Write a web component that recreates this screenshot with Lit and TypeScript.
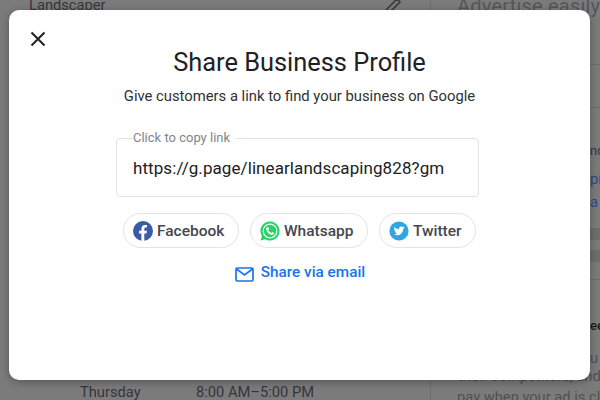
import { LitElement, html, css } from "lit";
import { customElement } from "lit/decorators.js";

@customElement("app-root")
export class AppRoot extends LitElement {
  static styles = css`
    :host { display: block; width: 600px; height: 400px; position: relative; overflow: hidden; background: #7b7b7b; font-family: Roboto, "Liberation Sans", sans-serif; color: #202124; }
    .bg { position: absolute; white-space: nowrap; color: #35363a; font-size: 14.7px; line-height: 20px; }
    .b1 { left: 29px; top: -5px; }
    .b2 { left: 457px; top: -8px; font-size: 20px; line-height: 28px; color: #55565a; letter-spacing: .2px;}
    .b3 { left: 80px; top: 382px; }
    .b4 { left: 196px; top: 382px; }
    .b5 { left: 590px; top: 141px; font-size: 13px; }
    .b6 { left: 590px; top: 169px; color: #2c4a80; }
    .b7 { left: 590px; top: 192px; color: #2c4a80; }
    .b8 { left: 590px; top: 316px; font-size: 13px; font-weight: 500; color: #1c1c1c; }
    .b9 { left: 590px; top: 348px; color: #4f5054; }
    .b10 { left: 458px; top: 366px; color: #4f5054; }
    .b11 { left: 457px; top: 387px; color: #4f5054; }
    .vl { position: absolute; width: 1px; background: #6e6e6e; }
    .hl { position: absolute; height: 1px; background: #6e6e6e; }
    .bar { position: absolute; left: 590px; width: 10px; background: #6e6e6e; }
    .pencil { position: absolute; left: 384px; top: -6px; }
    .modal { position: absolute; left: 9px; top: 10px; width: 581px; height: 370px; background: #fff; border-radius: 10px; box-shadow: 0 2px 8px rgba(0,0,0,.3); box-sizing: border-box; display: flex; flex-direction: column; align-items: center; padding-top: 36px; }
    .close { position: absolute; left: 19px; top: 19px; width: 20px; height: 20px; }
    h1 { margin: 0; font-size: 25.4px; line-height: 32px; font-weight: 400; color: #202124; }
    .sub { margin-top: 8px; font-size: 14.8px; line-height: 20px; color: #303134; }
    fieldset { margin: 24px 4px 0 0; padding: 0 16px; width: 363px; height: 67px; box-sizing: border-box; border: 1px solid #e3e3e3; border-radius: 4px; min-width: 0; }
    legend { padding: 0 5px 0 0; font-size: 13px; line-height: 16px; color: #80868b; margin-left: 0; }
    .link { font-size: 17px; line-height: 24px; color: #202124; margin-top: 10px; white-space: nowrap; letter-spacing: .08px; }
    .btns { display: flex; gap: 11px; margin: 16px 0 0 0; }
    .btn { height: 35px; box-sizing: border-box; border: 1px solid #e3e3e3; border-radius: 18px; display: flex; align-items: center; gap: 4px; padding: 0 13.5px 0 9px; font-size: 15.5px; font-weight: 500; color: #45484c; background: #fff; }
    .email { display: flex; align-items: center; gap: 7px; margin-top: 13px; margin-left: 1px; color: #1a73e8; font-size: 15.3px; font-weight: 500; line-height: 22px; }
    .email svg { margin-top: 4px; }
  `;

  render() {
    return html`
      <div class="bg b1">Landscaper</div>
      <div class="bg b2">Advertise easily in</div>
      <div class="bg b3">Thursday</div>
      <div class="bg b4">8:00 AM–5:00 PM</div>
      <div class="bg b5">nd</div>
      <div class="bg b6">pi</div>
      <div class="bg b7">a</div>
      <div class="bg b8">ee</div>
      <div class="bg b9">u</div>
      <div class="bg b10">their competitors, and</div>
      <div class="bg b11">pay when your ad is cl</div>
      <div class="vl" style="left:430px;top:0;height:10px"></div>
      <div class="vl" style="left:430px;top:380px;height:20px"></div>
      <div class="hl" style="left:590px;top:64px;width:10px"></div>
      <div class="hl" style="left:590px;top:107px;width:10px"></div>
      <div class="hl" style="left:590px;top:279px;width:10px"></div>
      <div class="bar" style="top:228px;height:12px"></div>
      <div class="bar" style="top:250px;height:12px"></div>
      <svg class="pencil" width="20" height="20" viewBox="0 0 20 20" fill="none" stroke="#3a3a3a" stroke-width="1.6"><path d="M2 16 L13 5 L16 8 L5 19 Z"/></svg>

      <div class="modal">
        <svg class="close" viewBox="0 0 20 20" fill="none" stroke="#202124" stroke-width="2"><path d="M3.5 3.5 L16.5 16.5 M16.5 3.5 L3.5 16.5"/></svg>
        <h1>Share Business Profile</h1>
        <div class="sub">Give customers a link to find your business on Google</div>
        <fieldset>
          <legend>Click to copy link</legend>
          <div class="link">https://g.page/linearlandscaping828?gm</div>
        </fieldset>
        <div class="btns">
          <div class="btn">
            <svg width="20" height="20" viewBox="0 0 20 20"><circle cx="10" cy="10" r="10" fill="#3b5ba7"/><path d="M8.4 20 V12.6 H6 V9.8 H8.4 V7.7 C8.4 5.2 9.9 3.9 12.1 3.9 C13.2 3.9 14 4 14 4 V6.4 H12.8 C11.6 6.4 11.3 7.1 11.3 7.9 V9.8 H13.9 L13.5 12.6 H11.3 V20 Z" fill="#fff"/></svg>
            Facebook
          </div>
          <div class="btn">
            <svg width="20" height="20" viewBox="0 0 20 20"><path d="M10 0.5 A9.5 9.5 0 0 0 1.9 15 L0.6 19.4 L5.2 18.2 A9.5 9.5 0 1 0 10 0.5 Z" fill="#25d366"/><circle cx="10" cy="10" r="7.4" fill="#fff"/><circle cx="10" cy="10" r="6.2" fill="#25d366"/><path d="M7.4 5.9 C6.6 6.4 6 7.3 6.2 8.6 C6.6 10.8 9.2 13.6 11.6 14 C12.8 14.2 13.8 13.5 14.1 12.6 L14.2 11.9 L12.2 10.9 L11.3 12 C10.1 11.6 8.8 10.2 8.3 9 L9.2 8 L8.3 5.9 Z" fill="#fff"/></svg>
            Whatsapp
          </div>
          <div class="btn">
            <svg width="20" height="20" viewBox="0 0 20 20"><circle cx="10" cy="10" r="9.6" fill="#2da7df"/><path d="M15.6 6.4 C15.2 6.6 14.8 6.7 14.3 6.8 C14.8 6.5 15.1 6.1 15.3 5.6 C14.9 5.9 14.4 6 13.9 6.1 C13.5 5.7 12.9 5.4 12.3 5.4 C10.8 5.4 9.7 6.8 10.1 8.2 C8.2 8.1 6.6 7.2 5.5 5.9 C4.9 6.9 5.2 8.2 6.2 8.9 C5.8 8.9 5.5 8.8 5.2 8.6 C5.2 9.7 5.9 10.6 7 10.8 C6.7 10.9 6.3 10.9 6 10.8 C6.3 11.7 7.1 12.3 8 12.4 C7.1 13.1 6 13.4 4.9 13.3 C5.9 13.9 7 14.3 8.2 14.3 C12 14.3 14.2 11.1 14.1 8.1 C14.6 7.7 15.2 7.1 15.6 6.4 Z" fill="#fff"/></svg>
            Twitter
          </div>
        </div>
        <div class="email">
          <svg width="19" height="15" viewBox="0 0 19 15" fill="none" stroke="#1a73e8" stroke-width="1.7"><rect x="1" y="1" width="17" height="13" rx="1.2"/><path d="M1.5 2 L9.5 8 L17.5 2"/></svg>
          Share via email
        </div>
      </div>
    `;
  }
}
